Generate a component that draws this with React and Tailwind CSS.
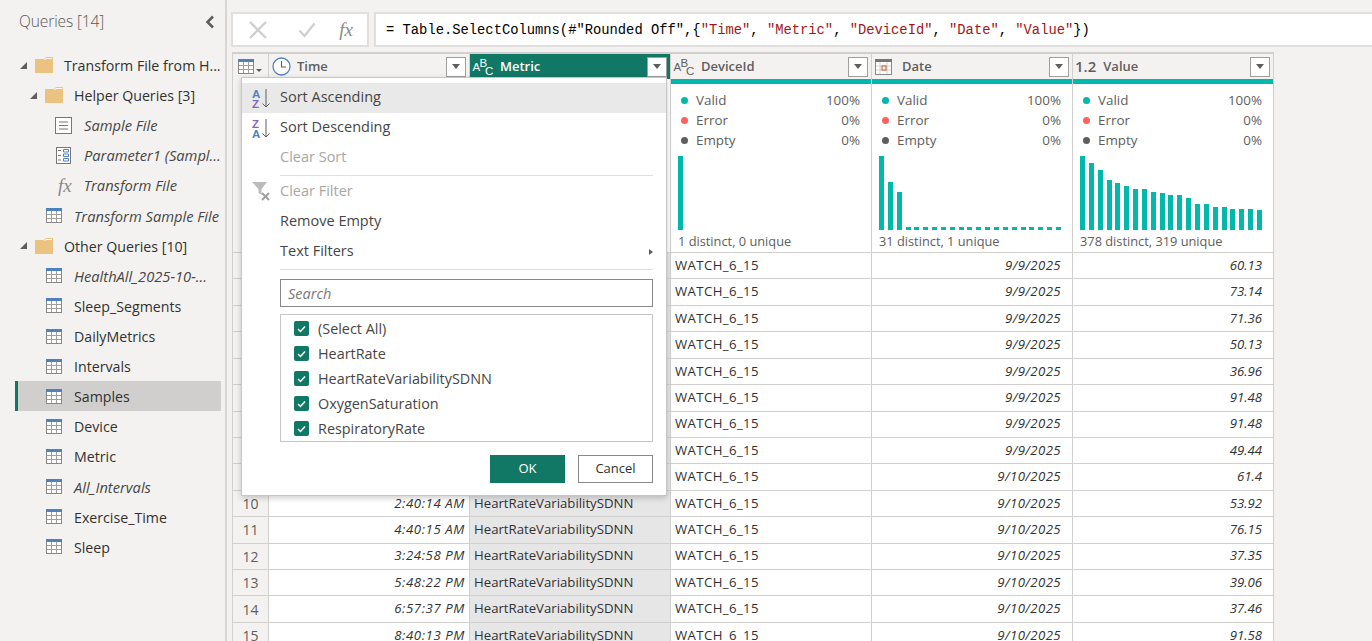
import React from 'react';

const FONT = "font-['Open_Sans','Noto_Sans',sans-serif]";

const TableIcon = () => (
  <svg width="16" height="15" viewBox="0 0 16 15" className="shrink-0">
    <rect x="0.5" y="0.5" width="15" height="14" fill="#fff" stroke="#8a8886" />
    <rect x="0" y="0" width="16" height="3" fill="#4f81bd" />
    <path d="M5.5 3v11M10.5 3v11M1 6.5h14M1 10.5h14" stroke="#a19f9d" fill="none" />
  </svg>
);

const FolderIcon = () => (
  <svg width="18" height="16" viewBox="0 0 18 16" className="mr-[3px] shrink-0">
    <path d="M0 2h9l2-2h7v16H0z" fill="#ebc380" />
    <path d="M9 3l2-2h6v1h-6l-1 1z" fill="#fff" />
  </svg>
);

const DocIcon = () => (
  <svg width="17" height="17" viewBox="0 0 17 17" className="shrink-0">
    <rect x="0.5" y="0.5" width="16" height="16" fill="#fff" stroke="#797775" />
    <path d="M4 5h9M4 8.5h9M4 12h9" stroke="#797775" />
  </svg>
);

const ParamIcon = () => (
  <svg width="15" height="17" viewBox="0 0 15 17" className="shrink-0">
    <rect x="0.5" y="0.5" width="14" height="16" fill="#fff" stroke="#797775" />
    <path d="M2 3.5h3M2 8.5h3M2 13h3" stroke="#797775" />
    <path d="M7.5 2.5h5v2.5h-5zM7.5 7h5v2.5h-5zM7.5 11.5h5V14h-5z" fill="none" stroke="#4f81bd" />
  </svg>
);

const Fx = ({ className }) => (
  <span className={`font-['Liberation_Serif',serif] italic ${className}`}>fx</span>
);

const Arrow = () => (
  <svg width="7" height="7" viewBox="0 0 7 7" className="shrink-0">
    <path d="M7 0v7H0z" fill="#605e5c" />
  </svg>
);

const queries = [
  { name: 'Transform File from H...', icon: 'folder', pad: 'pl-[20px]', gap: 'gap-[8px]', arrow: true },
  { name: 'Helper Queries [3]', icon: 'folder', pad: 'pl-[30px]', gap: 'gap-[8px]', arrow: true },
  { name: 'Sample File', icon: 'doc', pad: 'pl-[55px]', gap: 'gap-[12px]', italic: true },
  { name: 'Parameter1 (Sampl...', icon: 'param', pad: 'pl-[56px]', gap: 'gap-[13px]', italic: true },
  { name: 'Transform File', icon: 'fx', pad: 'pl-[58px]', gap: 'gap-[12px]', italic: true },
  { name: 'Transform Sample File', icon: 'table', pad: 'pl-[46px]', gap: 'gap-[12px]', italic: true },
  { name: 'Other Queries [10]', icon: 'folder', pad: 'pl-[20px]', gap: 'gap-[8px]', arrow: true },
  { name: 'HealthAll_2025-10-...', icon: 'table', pad: 'pl-[46px]', gap: 'gap-[12px]', italic: true },
  { name: 'Sleep_Segments', icon: 'table', pad: 'pl-[46px]', gap: 'gap-[12px]' },
  { name: 'DailyMetrics', icon: 'table', pad: 'pl-[46px]', gap: 'gap-[12px]' },
  { name: 'Intervals', icon: 'table', pad: 'pl-[46px]', gap: 'gap-[12px]' },
  { name: 'Samples', icon: 'table', pad: 'pl-[46px]', gap: 'gap-[12px]', selected: true },
  { name: 'Device', icon: 'table', pad: 'pl-[46px]', gap: 'gap-[12px]' },
  { name: 'Metric', icon: 'table', pad: 'pl-[46px]', gap: 'gap-[12px]' },
  { name: 'All_Intervals', icon: 'table', pad: 'pl-[46px]', gap: 'gap-[12px]', italic: true },
  { name: 'Exercise_Time', icon: 'table', pad: 'pl-[46px]', gap: 'gap-[12px]' },
  { name: 'Sleep', icon: 'table', pad: 'pl-[46px]', gap: 'gap-[12px]' },
];

function QueryIcon({ type }) {
  if (type === 'folder') return <FolderIcon />;
  if (type === 'doc') return <DocIcon />;
  if (type === 'param') return <ParamIcon />;
  if (type === 'fx') return <Fx className="text-[19px] leading-none text-[#8a8886]" />;
  return <TableIcon />;
}

function Sidebar() {
  return (
    <div className="w-[227px] shrink-0 border-r-2 border-[#d8d6d4] bg-[#f3f2f1]">
      <div className="flex h-[50px] items-center justify-between pl-[19px] pr-[10px] pb-[6px]">
        <span className="text-[15.5px] font-light tracking-[-0.1px] text-[#5a5856]">Queries [14]</span>
        <svg width="10" height="14" viewBox="0 0 10 14">
          <path d="M8 1.5L2.5 7 8 12.5" fill="none" stroke="#605e5c" strokeWidth="2.6" />
        </svg>
      </div>
      <div className="pl-[15px] pr-[4px]">
        {queries.map((q) => (
          <div
            key={q.name}
            className={`flex h-[30.12px] items-center ${q.selected ? 'bg-[#d0cfcd]' : ''}`}
          >
            <div className={`h-full w-[3px] shrink-0 ${q.selected ? 'bg-[#117865]' : ''}`} />
            <div className={`-ml-[18px] flex items-center ${q.pad} ${q.gap}`}>
              {q.arrow && <Arrow />}
              <QueryIcon type={q.icon} />
              <span
                className={`whitespace-nowrap ${
                  q.italic ? 'text-[14.7px] italic text-[#484644]' : 'pt-[1px] text-[14.2px] text-[#323130]'
                }`}
              >
                {q.name}
              </span>
            </div>
          </div>
        ))}
      </div>
    </div>
  );
}

function FormulaBar() {
  const s = 'text-[#a31515]';
  return (
    <div className="flex h-[35px] gap-[5px] pl-[4px]">
      <div className="flex w-[138px] items-center justify-between border-2 border-[#e1dfdd] bg-white pl-[15px] pr-[14px]">
        <svg width="20" height="18" viewBox="0 0 20 18">
          <path d="M2 1l16 16M18 1L2 17" stroke="#d2d0ce" strokeWidth="2.4" fill="none" />
        </svg>
        <svg width="18" height="16" viewBox="0 0 18 16" className="ml-[6px]">
          <path d="M1.5 8.5l5 5.5L16.5 1.5" stroke="#d2d0ce" strokeWidth="2.4" fill="none" />
        </svg>
        <Fx className="text-[19px] leading-none text-[#8a8886]" />
      </div>
      <div className="flex flex-1 items-center border-2 border-r-0 border-[#e1dfdd] bg-white pt-[3px] pl-[10px] font-['Liberation_Mono',monospace] text-[13.8px] whitespace-pre text-black">
        = Table.SelectColumns(#"Rounded Off",{'{'}
        <span className={s}>"Time"</span>, <span className={s}>"Metric"</span>,{' '}
        <span className={s}>"DeviceId"</span>, <span className={s}>"Date"</span>,{' '}
        <span className={s}>"Value"</span>
        {'})'}
      </div>
    </div>
  );
}

const DropBtn = () => (
  <div className="flex h-[20px] w-[20px] shrink-0 items-center justify-center border border-[#a19f9d] bg-white">
    <div className="h-0 w-0 border-x-[4.5px] border-t-[5px] border-x-transparent border-t-[#605e5c]" />
  </div>
);

const AbcIcon = ({ color }) => (
  <svg width="21" height="20" viewBox="0 0 21 20" className="shrink-0" fill={color} fontFamily="Liberation Sans" fontSize="11.5">
    <text x="0.5" y="14">A</text>
    <text x="7.5" y="9.5">B</text>
    <text x="13" y="18">C</text>
  </svg>
);

const ClockIcon = () => (
  <svg width="19" height="19" viewBox="0 0 19 19" className="shrink-0">
    <circle cx="9.5" cy="9.5" r="8.5" fill="#fff" stroke="#4f81bd" strokeWidth="1.3" />
    <path d="M9.5 4v6h4.5" fill="none" stroke="#605e5c" strokeWidth="1.1" />
  </svg>
);

const DateIcon = () => (
  <svg width="17" height="16" viewBox="0 0 17 16" className="shrink-0">
    <rect x="0.5" y="0.5" width="16" height="15" fill="#fff" stroke="#8a8886" />
    <rect x="0" y="0" width="17" height="3" fill="#797775" />
    <path d="M1 7h15M1 11h15M5 3v12M12 3v12" stroke="#d2d0ce" fill="none" />
    <rect x="7" y="7" width="4" height="4" fill="#fff" stroke="#ca5010" />
  </svg>
);

const columns = [
  { name: 'Time', icon: <ClockIcon />, gap: 'gap-[6px]', pl: 'pl-[3px]' },
  { name: 'Metric', icon: <AbcIcon color="#fff" />, gap: 'gap-[7px]', pl: 'pl-[2px]', active: true },
  { name: 'DeviceId', icon: <AbcIcon color="#605e5c" />, gap: 'gap-[7px]', pl: 'pl-[2px]' },
  { name: 'Date', icon: <DateIcon />, gap: 'gap-[10px]', pl: 'pl-[3px]' },
  { name: 'Value', icon: <span className="text-[15px] font-semibold text-[#605e5c]">1.2</span>, gap: 'gap-[7px]', pl: 'pl-[2px]' },
];

const dateBars = [74, 48, 38, 3, 3, 3, 3, 3, 3, 3, 3, 3, 3, 3, 3, 3, 3, 3, 3, 3, 3];
const valueBars = [74, 67, 60, 50, 47, 44, 41, 41, 38, 37, 35, 35, 32, 26, 26, 23, 23, 21, 21, 21, 20];

const profiles = [
  { bars: [74], text: '1 distinct, 0 unique' },
  { bars: dateBars, text: '31 distinct, 1 unique' },
  { bars: valueBars, text: '378 distinct, 319 unique' },
];

function Profile({ bars, text }) {
  const stats = [
    ['Valid', '100%', 'bg-[#01b8aa]'],
    ['Error', '0%', 'bg-[#fd625e]'],
    ['Empty', '0%', 'bg-[#605e5c]'],
  ];
  return (
    <div className="flex h-[173px] w-[201px] flex-col border-r border-[#d2d0ce] bg-white">
      <div className="h-[5px] bg-[#01b8aa]" />
      <div className="flex flex-col pt-[6px] pl-[10px] pr-[11px]">
        {stats.map(([label, pct, dot]) => (
          <div key={label} className="flex h-[20px] items-center text-[13.4px] text-[#605e5c]">
            <div className={`h-[7px] w-[7px] rounded-full ${dot}`} />
            <span className="ml-[8px]">{label}</span>
            <span className="ml-auto">{pct}</span>
          </div>
        ))}
      </div>
      <div className={`mt-[6px] flex h-[74px] items-end pl-[7px] pr-[11px] ${bars.length > 1 ? 'justify-between' : ''}`}>
        {bars.map((h, i) => (
          <div key={i} className="w-[5px] bg-[#01b8aa]" style={{ height: h }} />
        ))}
      </div>
      <div className="pt-[3px] pl-[7px] text-[12.8px] leading-[16px] text-[#605e5c]">{text}</div>
    </div>
  );
}

const rows = [
  ['', '', '9/9/2025', '60.13'],
  ['', '', '9/9/2025', '73.14'],
  ['', '', '9/9/2025', '71.36'],
  ['', '', '9/9/2025', '50.13'],
  ['', '', '9/9/2025', '36.96'],
  ['', '', '9/9/2025', '91.48'],
  ['', '', '9/9/2025', '91.48'],
  ['', '', '9/9/2025', '49.44'],
  ['', '', '9/10/2025', '61.4'],
  ['2:40:14 AM', 'HeartRateVariabilitySDNN', '9/10/2025', '53.92'],
  ['4:40:15 AM', 'HeartRateVariabilitySDNN', '9/10/2025', '76.15'],
  ['3:24:58 PM', 'HeartRateVariabilitySDNN', '9/10/2025', '37.35'],
  ['5:48:22 PM', 'HeartRateVariabilitySDNN', '9/10/2025', '39.06'],
  ['6:57:37 PM', 'HeartRateVariabilitySDNN', '9/10/2025', '37.46'],
  ['8:40:13 PM', 'HeartRateVariabilitySDNN', '9/10/2025', '91.58'],
];

const cell = 'flex h-full w-[201px] shrink-0 items-center border-r border-[#d2d0ce] whitespace-nowrap text-[13.2px] text-[#323130]';

function Grid() {
  return (
    <div className="mt-[5px] ml-[5px] w-[1042px] border-l border-t-2 border-[#d2d0ce]">
      {/* header */}
      <div className="flex h-[25px] bg-[#f3f2f1]">
        <div className="flex w-[36px] shrink-0 items-center gap-[2px] border-r border-[#d2d0ce] pl-[5px]">
          <TableIcon />
          <div className="mt-[8px] h-0 w-0 border-x-[3.5px] border-t-[3.5px] border-x-transparent border-t-[#605e5c]" />
        </div>
        {columns.map((c) => (
          <div
            key={c.name}
            className={`flex w-[201px] items-center border-r border-[#d2d0ce] ${c.pl} pr-[3px] ${c.active ? 'bg-[#117865] text-white' : 'text-[#605e5c]'}`}
          >
            <div className={`flex items-center ${c.gap}`}>
              {c.icon}
              <span className="text-[13px] font-semibold">{c.name}</span>
            </div>
            <div className="ml-auto">
              <DropBtn />
            </div>
          </div>
        ))}
      </div>
      {/* profiling */}
      <div className="flex border-b border-[#d2d0ce]">
        <div className="w-[36px] shrink-0 border-r border-[#d2d0ce] bg-[#f3f2f1]" />
        <div className="w-[201px] border-r border-[#d2d0ce] bg-white" />
        <div className="w-[201px] border-r border-[#d2d0ce] bg-white" />
        {profiles.map((p) => (
          <Profile key={p.text} {...p} />
        ))}
      </div>
      {/* rows */}
      {rows.map((r, i) => (
        <div key={i} className="flex h-[26.43px] border-b border-[#d2d0ce] bg-white">
          <div className="flex h-full w-[36px] shrink-0 items-center justify-center border-r border-[#d2d0ce] bg-[#f3f2f1] text-[14px] text-[#605e5c]">
            {i + 1}
          </div>
          <div className={`${cell} justify-end pr-[4px] italic tracking-[0.6px]`}>{r[0]}</div>
          <div className={`${cell} bg-[#e6e6e6] pl-[4px]`}>{r[1]}</div>
          <div className={`${cell} pl-[4px] tracking-[0.4px]`}>WATCH_6_15</div>
          <div className={`${cell} justify-end pr-[11px] italic tracking-[0.4px]`}>{r[2]}</div>
          <div className={`${cell} justify-end pr-[11px] italic`}>{r[3]}</div>
        </div>
      ))}
    </div>
  );
}

const SortAsc = ({ down }) => (
  <svg width="20" height="21" viewBox="0 0 20 21" className="shrink-0" fontFamily="Liberation Sans" fontWeight="bold" fontSize="11.5">
    <text x="0" y="9.5" fill={down ? '#8764b8' : '#4f81bd'}>{down ? 'Z' : 'A'}</text>
    <text x="0" y="20" fill={down ? '#4f81bd' : '#8764b8'}>{down ? 'A' : 'Z'}</text>
    <path d="M14 1v18M10.5 15.5L14 19l3.5-3.5" fill="none" stroke="#605e5c" />
  </svg>
);

const FilterClear = () => (
  <svg width="20" height="20" viewBox="0 0 20 20" className="shrink-0">
    <path d="M0 0h15L9.5 7v6l-3-2V7z" fill="#bdbbb9" />
    <path d="M10 11l7 7M17 11l-7 7" stroke="#a19f9d" strokeWidth="2" fill="none" />
  </svg>
);

function MenuItem({ label, disabled, active, icon, submenu }) {
  return (
    <div className={`flex h-[30px] items-center ${active ? 'bg-[#e9e9e9]' : ''}`}>
      <div className="flex w-[38px] shrink-0 justify-center pl-[1px]">{icon}</div>
      <span className={`pb-[2px] text-[14.5px] ${disabled ? 'text-[#a8a6a4]' : 'text-[#484644]'}`}>{label}</span>
      {submenu && (
        <div className="mr-[13px] ml-auto h-0 w-0 border-y-[3.5px] border-l-[4px] border-y-transparent border-l-[#605e5c]" />
      )}
    </div>
  );
}

function Menu() {
  const checks = ['(Select All)', 'HeartRate', 'HeartRateVariabilitySDNN', 'OxygenSaturation', 'RespiratoryRate'];
  return (
    <div className="absolute top-[77px] left-[241px] h-[419px] w-[426px] border border-[#c8c6c4] bg-white pt-[5px] shadow-[0_2px_6px_rgba(0,0,0,0.2)]">
      <MenuItem label="Sort Ascending" active icon={<SortAsc />} />
      <MenuItem label="Sort Descending" icon={<SortAsc down />} />
      <MenuItem label="Clear Sort" disabled />
      <div className="mt-[2px] mr-[13px] mb-[1px] ml-[38px] h-px bg-[#e1dfdd]" />
      <MenuItem label="Clear Filter" disabled icon={<FilterClear />} />
      <MenuItem label="Remove Empty" />
      <MenuItem label="Text Filters" submenu />
      <div className="mt-[2px] mr-[13px] ml-[38px] h-px bg-[#e1dfdd]" />
      <div className="mr-[13px] ml-[38px]">
        <div className="mt-[9px] flex h-[28px] items-center border border-[#8a8886] pt-[1px] pl-[7px] text-[14.5px] italic text-[#797775]">
          Search
        </div>
        <div className="mt-[7px] h-[128px] overflow-hidden border border-[#c8c6c4] pt-[1px] pl-[13px]">
          {checks.map((c) => (
            <div key={c} className="flex h-[25px] items-center gap-[9px]">
              <div className="flex h-[15px] w-[15px] items-center justify-center rounded-[2px] bg-[#117865]">
                <svg width="9" height="8" viewBox="0 0 9 8">
                  <path d="M1 4l2.5 2.5L8 1.5" fill="none" stroke="#fff" strokeWidth="1.5" />
                </svg>
              </div>
              <span className="text-[14.4px] text-[#484644]">{c}</span>
            </div>
          ))}
        </div>
        <div className="mt-[13px] flex justify-end gap-[13px]">
          <div className="flex h-[28px] w-[75px] items-center justify-center bg-[#117865] text-[13px] text-white">OK</div>
          <div className="flex h-[28px] w-[75px] items-center justify-center border border-[#8a8886] text-[13px] text-[#323130]">Cancel</div>
        </div>
      </div>
    </div>
  );
}

export default function App() {
  return (
    <div className={`relative flex h-[641px] w-[1372px] overflow-hidden bg-[#f3f2f1] ${FONT}`}>
      <Sidebar />
      <div className="flex-1 pt-[12px]">
        <FormulaBar />
        <Grid />
      </div>
      <Menu />
    </div>
  );
}
